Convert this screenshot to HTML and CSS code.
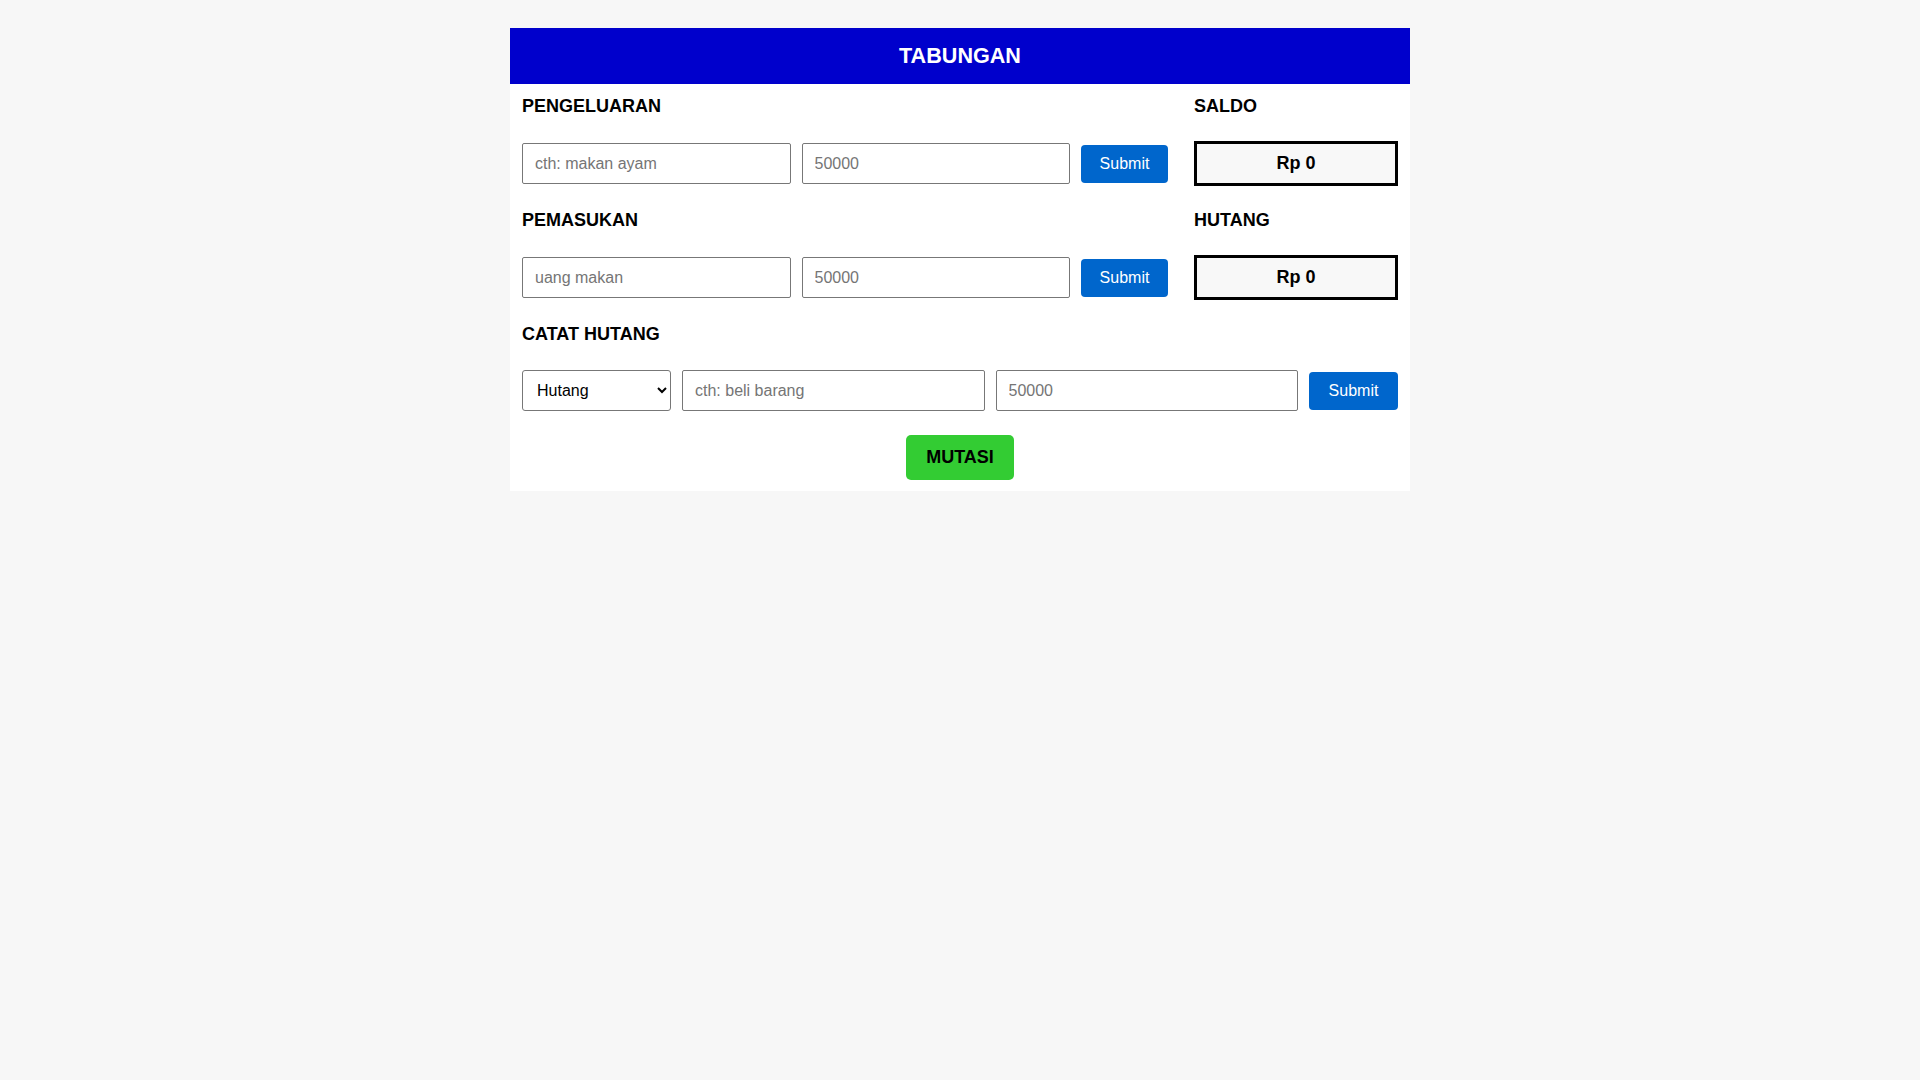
FILE: index.html
```html
<!DOCTYPE html>
<html lang="id">
<head>
<meta charset="utf-8">
<title>Tabungan</title>
<link rel="stylesheet" href="styles.css">
</head>
<body>
<div class="app">
  <header class="app-header">TABUNGAN</header>
  <main class="app-main">
    <div class="top-grid">
      <h3 class="label">PENGELUARAN</h3>
      <h3 class="label">SALDO</h3>
      <div class="form-row">
        <input class="field" type="text" placeholder="cth: makan ayam">
        <input class="field" type="text" placeholder="50000">
        <button class="btn-submit">Submit</button>
      </div>
      <div class="amount-box">Rp 0</div>
      <h3 class="label">PEMASUKAN</h3>
      <h3 class="label">HUTANG</h3>
      <div class="form-row">
        <input class="field" type="text" placeholder="uang makan">
        <input class="field" type="text" placeholder="50000">
        <button class="btn-submit">Submit</button>
      </div>
      <div class="amount-box">Rp 0</div>
    </div>
    <h3 class="label">CATAT HUTANG</h3>
    <div class="form-row debt-row">
      <select class="select">
        <option>Hutang</option>
        <option>Bayar</option>
      </select>
      <input class="field" type="text" placeholder="cth: beli barang">
      <input class="field" type="text" placeholder="50000">
      <button class="btn-submit wide">Submit</button>
    </div>
    <div class="center">
      <button class="btn-mutasi">MUTASI</button>
    </div>
  </main>
</div>
</body>
</html>
```
FILE: styles.css
```css
html, body {
  margin: 0;
  padding: 0;
  background: #f7f7f7;
  font-family: "Liberation Sans", Arial, sans-serif;
}
body {
  padding-top: 28px;
}
.app {
  width: 900px;
  margin: 0 auto;
  background: #ffffff;
}
.app-header {
  background: #0000cc;
  color: #ffffff;
  height: 56px;
  line-height: 56px;
  text-align: center;
  font-weight: bold;
  font-size: 21.6px;
}
.app-main {
  padding: 12px 12px 11px;
  display: flex;
  flex-direction: column;
  gap: 24px;
}
.top-grid {
  display: grid;
  grid-template-columns: 646px 204px;
  column-gap: 26px;
  row-gap: 24px;
  align-items: center;
}
.label {
  margin: 0;
  font-size: 18px;
  line-height: 21px;
  font-weight: bold;
  color: #000;
}
.form-row {
  display: flex;
  align-items: center;
  gap: 11px;
  height: 45px;
}
.debt-row {
  height: 41px;
  margin-top: 1px;
}
.field {
  flex: 1;
  min-width: 0;
  height: 41px;
  box-sizing: border-box;
  border: 1px solid #777;
  border-radius: 2px;
  padding: 0 12px;
  font-family: "Liberation Sans", Arial, sans-serif;
  font-size: 16px;
  color: #000;
  background: #fff;
  margin: 0;
}
.field::placeholder {
  color: #757575;
}
.select {
  width: 149px;
  height: 41px;
  box-sizing: border-box;
  border: 1px solid #777;
  border-radius: 3px;
  padding: 0 4px 0 10px;
  font-family: "Liberation Sans", Arial, sans-serif;
  font-size: 16px;
  color: #000;
  background: #fff;
  margin: 0;
}
.btn-submit {
  width: 87px;
  height: 38px;
  border: none;
  border-radius: 4px;
  background: #0066cc;
  color: #fff;
  font-family: "Liberation Sans", Arial, sans-serif;
  font-size: 16px;
  padding: 0;
  margin: 0;
}
.btn-submit.wide {
  width: 89px;
}
.amount-box {
  height: 45px;
  box-sizing: border-box;
  border: 3px solid #000;
  background: #f8f8f8;
  display: flex;
  align-items: center;
  justify-content: center;
  font-weight: bold;
  font-size: 18px;
  color: #000;
}
.center {
  display: flex;
  justify-content: center;
}
.btn-mutasi {
  width: 108px;
  height: 45px;
  border: none;
  border-radius: 5px;
  background: #33cc33;
  color: #000;
  font-family: "Liberation Sans", Arial, sans-serif;
  font-weight: bold;
  font-size: 18px;
  padding: 0;
  margin: 0;
}
```
